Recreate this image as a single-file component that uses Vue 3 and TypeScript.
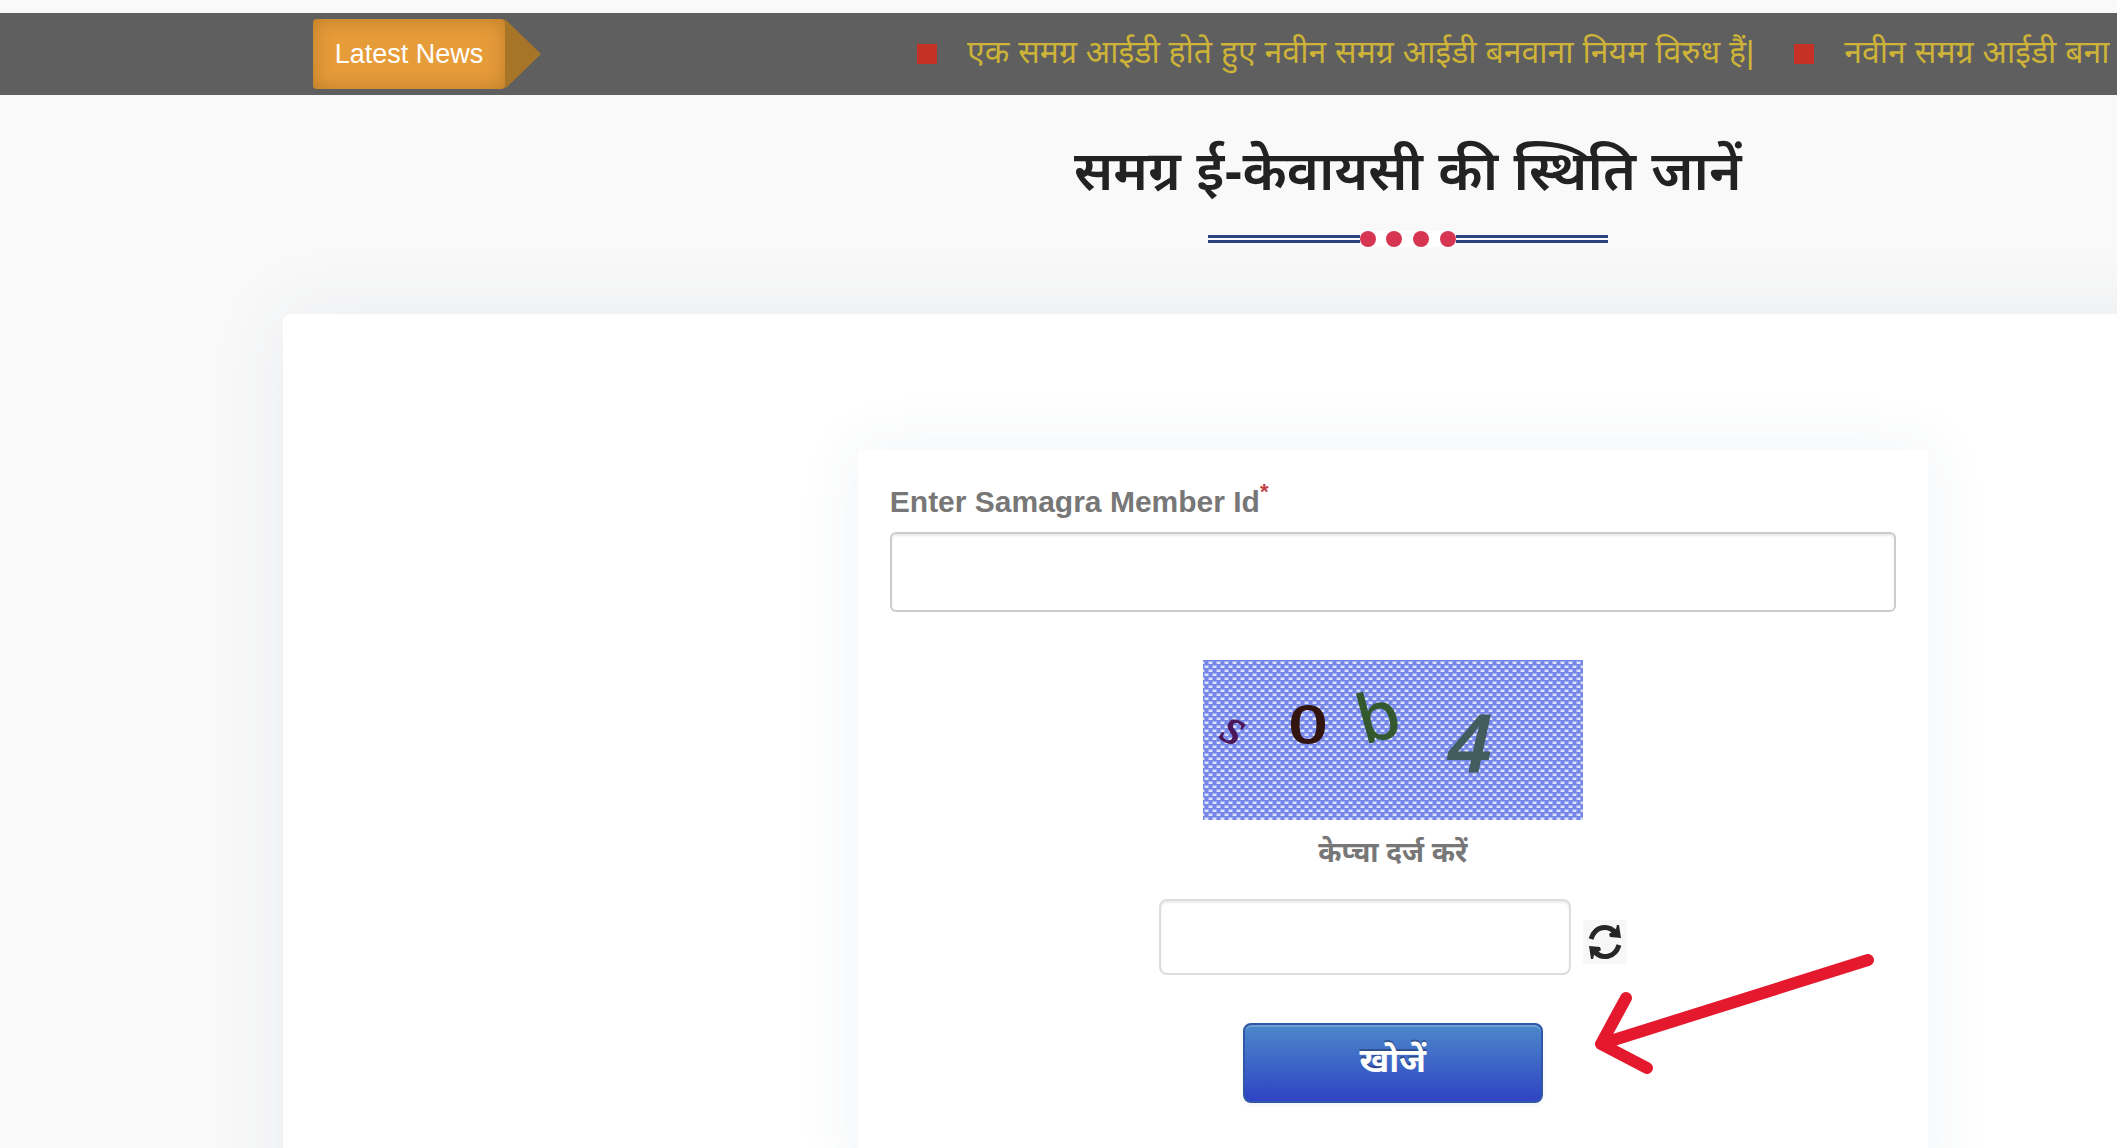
<script setup lang="ts">
import { ref } from 'vue'

const memberId = ref('')
const captcha = ref('')
const news = [
  'एक समग्र आईडी होते हुए नवीन समग्र आईडी बनवाना नियम विरुध हैं|',
  'नवीन समग्र आईडी बना',
]
</script>

<template>
  <div class="viewport">
    <div class="page">
      <div class="ticker">
        <div class="ticker-label">Latest News</div>
        <div class="ticker-tip"></div>
        <ul class="ticker-list">
          <li v-for="item in news" :key="item">
            <span class="bullet"></span>
            <a href="#">{{ item }}</a>
          </li>
        </ul>
      </div>

      <header class="heading">
        <h1>समग्र ई-केवायसी की स्थिति जानें</h1>
        <div class="divider">
          <span class="rule"></span>
          <span class="dots"><i></i><i></i><i></i><i></i></span>
          <span class="rule"></span>
        </div>
      </header>

      <main class="panel">
        <form class="card" @submit.prevent>
          <label class="label" for="member">Enter Samagra Member Id<sup>*</sup></label>
          <input id="member" v-model="memberId" class="field" type="text" />

          <svg class="captcha" width="380" height="160" viewBox="0 0 380 160" role="img" aria-label="Captcha">
            <defs>
              <pattern id="weave" width="8" height="8" patternUnits="userSpaceOnUse">
                <rect width="8" height="8" fill="#7486e8" />
                <g fill="#fff">
                  <g opacity=".3">
                    <rect x="1" y="5" width="5" height="3" />
                    <rect x="5" y="1" width="3" height="3" />
                    <rect x="0" y="1" width="2" height="3" />
                  </g>
                  <g opacity=".7">
                    <rect x="2" y="6" width="3" height="2" />
                    <rect x="6" y="2" width="2" height="2" />
                    <rect x="0" y="2" width="1" height="2" />
                  </g>
                </g>
              </pattern>
            </defs>
            <rect width="380" height="160" fill="url(#weave)" />
            <text class="serif" transform="translate(15 78) rotate(26)" font-size="52" font-style="italic" fill="#4b1659" stroke="#4b1659">s</text>
            <text class="serif" transform="translate(86 82)" font-size="76" fill="#33150f" stroke="#33150f" stroke-width="2">o</text>
            <text class="sans" transform="translate(161 85) rotate(-15)" font-size="68" font-weight="500" fill="#34592f">b</text>
            <text class="sans" transform="translate(244 112)" font-size="82" font-style="italic" font-weight="600" fill="#435c5e">4</text>
          </svg>

          <label class="label captcha-label" for="captcha">केप्चा दर्ज करें</label>
          <div class="captcha-row">
            <input id="captcha" v-model="captcha" class="field small" type="text" />
            <button class="refresh" type="button" aria-label="Refresh captcha">
              <svg width="44" height="44" viewBox="0 0 44 44">
                <g fill="none" stroke="#262626" stroke-width="5">
                  <path d="M8 19C12 6 25 4 33 13" />
                  <path d="M36 25C32 38 19 40 11 31" />
                </g>
                <path d="M38 18L36 5L34 5L33 9L26 14L27 17Z" fill="#262626" />
                <path d="M6 26L8 39L10 39L11 35L18 30L17 27Z" fill="#262626" />
              </svg>
            </button>
          </div>
          <button class="submit" type="submit">खोजें</button>

          <svg class="pointer" width="290" height="140" viewBox="0 0 290 140" aria-hidden="true">
            <path d="M279 22L12 106L37 60M12 106L58 130" />
          </svg>
        </form>
      </main>
    </div>
  </div>
</template>

<style>
body {
  background: #f9f9f9;
}
</style>

<style scoped>
.viewport {
  height: 100vh;
  overflow: hidden;
}
.page {
  width: 133%;
  box-sizing: border-box;
  padding-top: 13px;
  font-family: 'Liberation Sans', 'Noto Sans Devanagari', 'Noto Sans', sans-serif;
}
.ticker {
  display: flex;
  align-items: center;
  height: 82px;
  padding-left: 313px;
  background: #5f5f5f;
}
.ticker-label {
  box-sizing: border-box;
  height: 70px;
  width: 192px;
  border-radius: 4px;
  background: #e79c3a;
  box-shadow: inset 0 0 20px rgba(120, 75, 10, 0.4);
  color: #fff;
  font-size: 27px;
  line-height: 70px;
  text-align: center;
}
.ticker-tip {
  border: 35px solid transparent;
  border-left: 36px solid #a67528;
  border-right: 0;
}
.ticker-list {
  display: flex;
  gap: 40px;
  height: 40px;
  margin: 0 0 0 376px;
  padding: 0;
  overflow: hidden;
  list-style: none;
}
.ticker-list li {
  display: flex;
  align-items: center;
  gap: 30px;
  white-space: nowrap;
}
.bullet {
  width: 20px;
  height: 20px;
  background: #c53125;
}
.ticker-list a {
  padding-top: 2px;
  color: #cdb338;
  font-size: 32px;
  text-decoration: none;
}
.heading {
  padding-top: 32px;
  text-align: center;
}
.heading h1 {
  height: 104px;
  margin: 0;
  color: #222;
  font-size: 55px;
  font-weight: 600;
  line-height: 88px;
}
.divider {
  display: flex;
  align-items: center;
  justify-content: center;
}
.rule {
  width: 152px;
  height: 2px;
  border: solid #29447e;
  border-width: 3px 0;
}
.dots {
  display: flex;
  justify-content: space-between;
  width: 96px;
  background: #fff;
}
.dots i {
  width: 16px;
  height: 16px;
  border-radius: 50%;
  background: #d63651;
}
.panel {
  margin: 68px 283px 0;
  padding: 136px 30px 60px 0;
  border-radius: 8px;
  background: #fff;
  box-shadow: 0 0 80px rgba(55, 75, 130, 0.08);
}
.heading {
  margin-bottom: -1px;
}
.card {
  position: relative;
  display: flex;
  flex-direction: column;
  align-items: center;
  box-sizing: border-box;
  max-width: 1070px;
  margin: 0 auto;
  padding: 32px 32px 80px;
  background: #fff;
  box-shadow: 0 0 60px rgba(55, 90, 130, 0.08);
}
.label {
  color: #777;
  font-size: 30px;
  font-weight: 700;
  line-height: 40px;
}
.label[for='member'] {
  align-self: flex-start;
  height: 50px;
}
.label sup {
  color: #c0404a;
  font-size: 22px;
  line-height: 0;
  vertical-align: 13px;
}
.field {
  box-sizing: border-box;
  width: 100%;
  height: 80px;
  padding: 12px 24px;
  border: 2px solid #ccc;
  border-radius: 6px;
  background: #fff;
  box-shadow: inset 0 2px 2px rgba(0, 0, 0, 0.08);
  font-size: 28px;
}
.captcha {
  display: block;
  margin-top: 48px;
}
.serif {
  font-family: 'Liberation Serif', serif;
}
.sans {
  font-family: 'Noto Sans', sans-serif;
}
.captcha-label {
  margin-top: 13px;
  font-size: 28px;
}
.captcha-row {
  display: flex;
  align-items: flex-end;
  gap: 12px;
  margin-top: 26px;
}
.field.small {
  width: 412px;
  height: 76px;
  border-color: #ddd;
  border-radius: 8px;
}
.refresh {
  width: 44px;
  height: 44px;
  margin-bottom: 11px;
  padding: 0;
  border: 0;
  background: #f7f7f7;
}
.refresh svg {
  display: block;
}
.submit {
  width: 300px;
  height: 80px;
  margin-top: 48px;
  padding: 0;
  border: 2px solid #3158a8;
  border-radius: 8px;
  background: linear-gradient(#4c88ca, #2f43c4);
  box-shadow: inset 0 2px 0 rgba(255, 255, 255, 0.2), 0 2px 4px rgba(0, 0, 0, 0.05);
  color: #fff;
  font-family: inherit;
  font-size: 34px;
  font-weight: 700;
  text-shadow: 0 -2px 0 rgba(0, 0, 0, 0.3);
}
.pointer {
  position: absolute;
  top: 488px;
  left: 731px;
}
.pointer path {
  fill: none;
  stroke: #e5192d;
  stroke-width: 12;
  stroke-linecap: round;
  stroke-linejoin: round;
}
</style>
